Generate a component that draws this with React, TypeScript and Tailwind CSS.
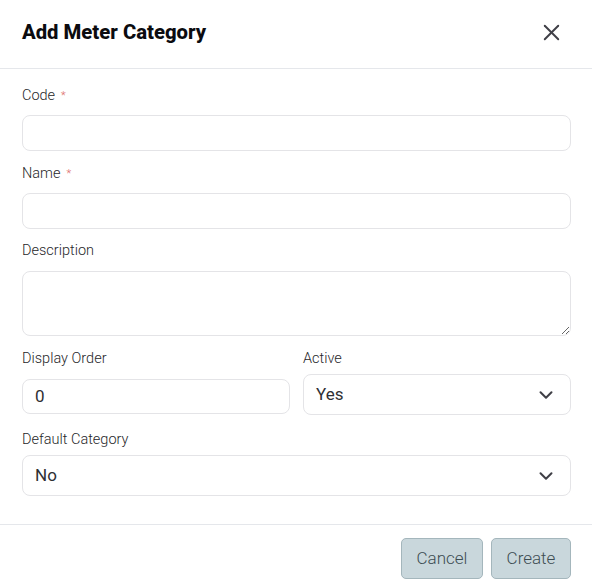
import { X, ChevronDown } from "lucide-react";

function Label({ text, required, className = "" }: { text: string; required?: boolean; className?: string }) {
  return (
    <div className={`flex h-5 items-center text-[14.5px] font-light leading-5 text-[#27272a] ${className}`}>
      {text}
      {required && <span className="ml-[6px] text-[11px] text-[#dc6a6a]">*</span>}
    </div>
  );
}

function SelectBox({ value, className = "" }: { value: string; className?: string }) {
  return (
    <div
      className={`flex items-center justify-between rounded-[8px] border border-[#e4e4e7] bg-white pl-[12px] pr-[13px] text-[17px] text-[#2f2f33] ${className}`}
    >
      <span>{value}</span>
      <ChevronDown className="size-[22px] text-[#3f3f46]" strokeWidth={2.2} />
    </div>
  );
}

export default function App() {
  return (
    <div className="h-[586px] w-[592px] bg-white font-['Roboto',sans-serif]">
      <div className="flex h-[69px] items-center justify-between border-b border-[#e5e7eb] pl-[22px] pr-[27px]">
        <h2 className="mb-[3px] text-[20.3px] font-extrabold text-[#0b0b0f]">Add Meter Category</h2>
        <X className="mb-[3px] size-[27px] text-[#3f3f46]" strokeWidth={1.7} />
      </div>

      <div className="border-b border-[#e5e7eb] pb-[28px] pl-[22px] pr-[21px] pt-[17px]">
        <Label text="Code" required className="mb-[9px]" />
        <input className="block h-[36px] w-full rounded-[8px] border border-[#e4e4e7] bg-white outline-none" />

        <Label text="Name" required className="mb-[9px] mt-[13px]" />
        <input className="block h-[36px] w-full rounded-[8px] border border-[#e4e4e7] bg-white outline-none" />

        <Label text="Description" className="mb-[10px] mt-[12px]" />
        <textarea className="block h-[65px] w-full rounded-[8px] border border-[#e4e4e7] bg-white outline-none" />

        <div className="mt-[13px] grid grid-cols-2 gap-[13px]">
          <div>
            <Label text="Display Order" className="mb-[10px]" />
            <div className="flex h-[35px] items-center rounded-[8px] border border-[#e4e4e7] bg-white pl-[12px] text-[17px] text-[#2f2f33]">
              0
            </div>
          </div>
          <div>
            <Label text="Active" className="mb-[5px]" />
            <SelectBox value="Yes" className="h-[41px]" />
          </div>
        </div>

        <Label text="Default Category" className="mb-[5px] mt-[15px]" />
        <SelectBox value="No" className="h-[41px]" />
      </div>

      <div className="flex justify-end gap-[8px] pr-[21px] pt-[13px]">
        <button className="h-[41px] w-[82px] rounded-[5px] border border-[#a4b6bc] bg-[#c9d7dc] text-[17px] font-light text-[#3d4d53]">
          Cancel
        </button>
        <button className="h-[41px] w-[80px] rounded-[5px] border border-[#a4b6bc] bg-[#c9d7dc] text-[17px] font-light text-[#3d4d53]">
          Create
        </button>
      </div>
    </div>
  );
}
